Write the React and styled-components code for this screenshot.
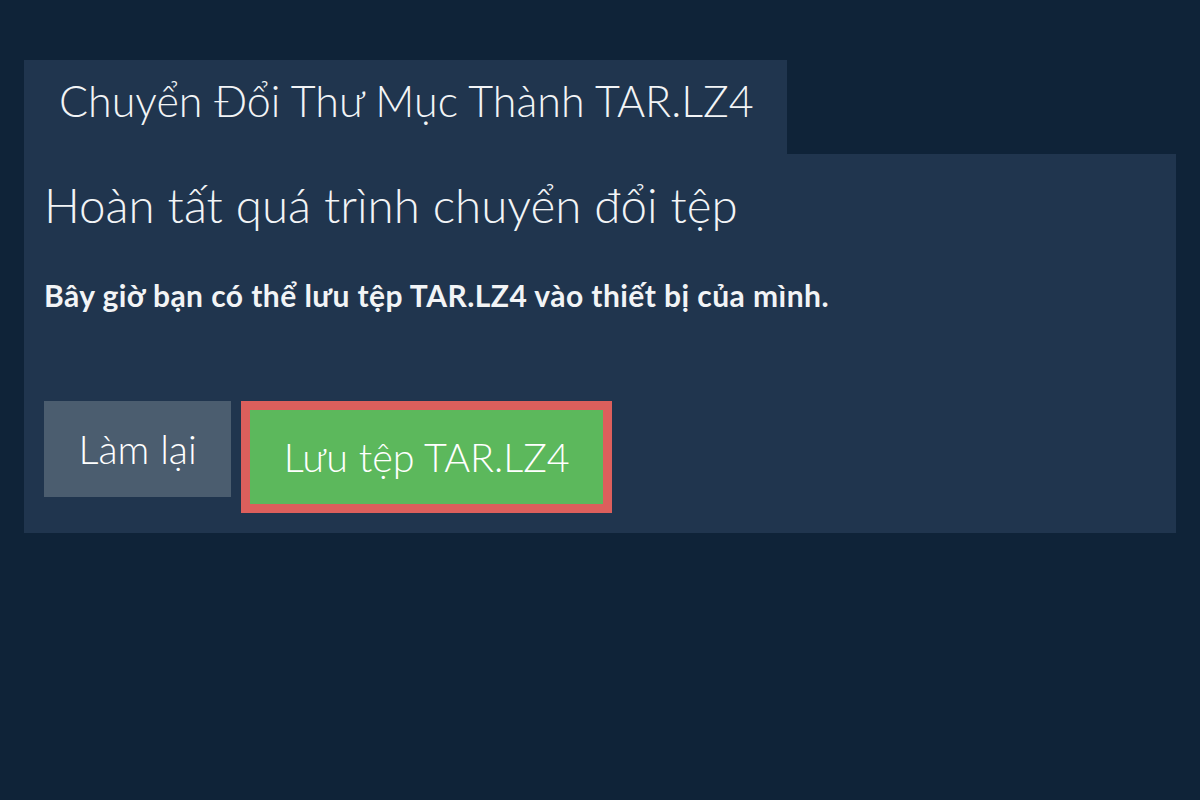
import React from "react";
import styled, { createGlobalStyle } from "styled-components";

const GlobalStyle = createGlobalStyle`
  html, body {
    margin: 0;
    padding: 0;
    background: #0f2338;
  }
  body {
    font-family: Lato, "Open Sans", sans-serif;
    color: #ffffff;
  }
`;

const App = () => {
  return (
    <>
      <GlobalStyle />
      <Page>
        <Tab>Chuyển Đổi Thư Mục Thành TAR.LZ4</Tab>
        <Panel>
          <Heading>Hoàn tất quá trình chuyển đổi tệp</Heading>
          <Message>Bây giờ bạn có thể lưu tệp TAR.LZ4 vào thiết bị của mình.</Message>
          <Actions>
            <Button>Làm lại</Button>
            <SaveWrap>
              <Button $primary>Lưu tệp TAR.LZ4</Button>
            </SaveWrap>
          </Actions>
        </Panel>
      </Page>
    </>
  );
};

export default App;

const Page = styled.div`
  width: 1200px;
  height: 800px;
  padding: 60px 24px 0;
  box-sizing: border-box;
  display: flex;
  flex-direction: column;
  align-items: flex-start;
`;

const Tab = styled.div`
  background-color: #20354e;
  height: 94px;
  box-sizing: border-box;
  padding: 15px 33px 0 35px;
  font-size: 43px;
  font-weight: 300;
  line-height: 1.2;
  color: #f2f4f6;
  white-space: nowrap;
`;

const Panel = styled.div`
  align-self: stretch;
  background-color: #20354e;
  padding: 22px 20px 20px;
  display: flex;
  flex-direction: column;
`;

const Heading = styled.h1`
  margin: 0;
  font-size: 47.5px;
  font-weight: 300;
  line-height: 1.2;
  color: #f2f4f6;
`;

const Message = styled.p`
  margin: 44px 0 0;
  font-size: 30px;
  font-weight: 700;
  letter-spacing: 0.45px;
  line-height: 1.2;
  color: #f2f4f6;
`;

const Actions = styled.div`
  margin-top: 88px;
  display: flex;
  align-items: flex-start;
  gap: 10px;
`;

const SaveWrap = styled.div`
  border: 9px solid #dc5f5c;
  display: flex;
`;

const Button = styled.button`
  border: none;
  margin: 0;
  font-family: Lato, "Open Sans", sans-serif;
  font-size: 39.5px;
  font-weight: 300;
  line-height: 1.2;
  color: #ffffff;
  background-color: ${(p) => (p.$primary ? "#5cb85c" : "#4b5d6f")};
  height: ${(p) => (p.$primary ? "94px" : "96px")};
  padding: ${(p) => (p.$primary ? "0 33.5px" : "0 34.5px")};
  cursor: pointer;
`;
